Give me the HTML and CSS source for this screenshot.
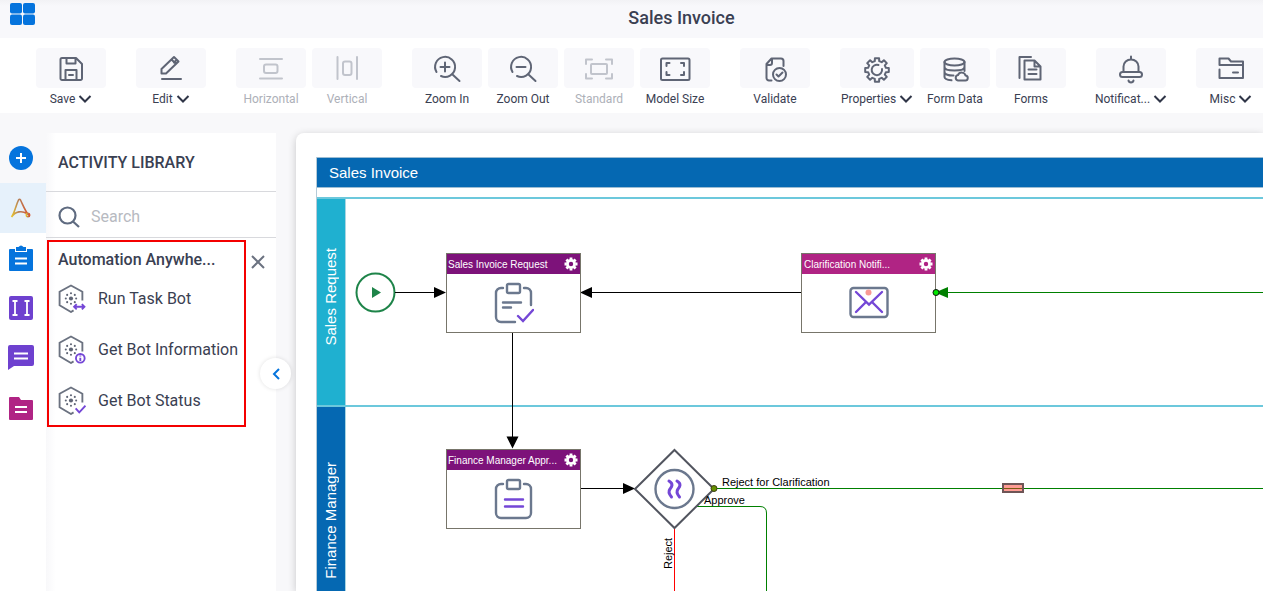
FILE: index.html
```html
<!DOCTYPE html>
<html lang="en">
<head>
  <meta charset="UTF-8" />
  <meta name="viewport" content="width=device-width, initial-scale=1.0"/>
  <title>Sales Invoice</title>
  <link rel="stylesheet" href="styles.css">
</head>
<body>
  <header class="topbar">
    <button class="apps" aria-label="Apps">
      <svg width="26" height="24" viewBox="0 0 26 24" fill="#0574dd"><rect x="0" y="1" width="12" height="10.500" rx="2"/><rect x="13" y="1" width="12" height="10.500" rx="2"/><rect x="0" y="12.500" width="12" height="10.500" rx="2"/><rect x="13" y="12.500" width="12" height="10.500" rx="2"/></svg>
    </button>
    <h1>Sales Invoice</h1>
  </header>

  <nav class="toolbar">
    <div class="group">
      <button class="tool">
        <span class="tile"><svg class="icon" viewBox="0 0 32 32"><path d="M7 6h14l6 6v14.500a1.500 1.500 0 0 1-1.500 1.500H7a1.500 1.500 0 0 1-1.500-1.500V7.500A1.500 1.500 0 0 1 7 6zM11.500 6v5.500h9V6M10.500 28V18h11v10M14 23h4"/></svg></span>
        <span class="label">Save <svg class="chev" viewBox="0 0 14 8"><path d="M1.500 1l5.500 5.500L12.500 1"/></svg></span>
      </button>
    </div>
    <div class="group">
      <button class="tool">
        <span class="tile"><svg class="icon" viewBox="0 0 32 32"><path d="M7 27h19M6.500 21.500v-4.500L19 5l4.500 4.500L11 21.500zM16.500 7.500l4.500 4.500M21 8.500l-2 2"/></svg></span>
        <span class="label">Edit <svg class="chev" viewBox="0 0 14 8"><path d="M1.500 1l5.500 5.500L12.500 1"/></svg></span>
      </button>
    </div>
    <div class="group">
      <button class="tool" disabled>
        <span class="tile"><svg class="icon" viewBox="0 0 32 32"><path d="M5 7h22M5 26.500h22"/><rect x="9" y="12.500" width="13.500" height="8.500" rx="2"/></svg></span>
        <span class="label">Horizontal</span>
      </button>
      <button class="tool" disabled>
        <span class="tile"><svg class="icon" viewBox="0 0 32 32"><path d="M6.500 5v22M26 5v22"/><rect x="12" y="9.500" width="8.500" height="13.500" rx="2"/></svg></span>
        <span class="label">Vertical</span>
      </button>
    </div>
    <div class="group">
      <button class="tool">
        <span class="tile"><svg class="icon" viewBox="0 0 32 32"><path d="M5.500 20A10 10 0 1 1 10 24M14 10.500v9M9.500 15h9M21.500 22.500L28.500 29"/></svg></span>
        <span class="label">Zoom In</span>
      </button>
      <button class="tool">
        <span class="tile"><svg class="icon" viewBox="0 0 32 32"><path d="M5.500 20A10 10 0 1 1 10 24M9.500 15h9M21.500 22.500L28.500 29"/></svg></span>
        <span class="label">Zoom Out</span>
      </button>
      <button class="tool" disabled>
        <span class="tile"><svg class="icon" viewBox="0 0 32 32"><path d="M3 12V7.500h6M23 7.500h6V12M29 22v4.500h-6M9 26.500H3V22"/><rect x="8" y="12" width="16" height="10" rx="1"/></svg></span>
        <span class="label">Standard</span>
      </button>
      <button class="tool">
        <span class="tile"><svg class="icon" viewBox="0 0 32 32"><rect x="2" y="6.500" width="28.500" height="21.500" rx="1.500"/><path d="M7.500 14v-3h3M22 11h3v3M25 20v3h-3M10.500 23h-3v-3"/></svg></span>
        <span class="label">Model Size</span>
      </button>
    </div>
    <div class="group">
      <button class="tool">
        <span class="tile"><svg class="icon" viewBox="0 0 32 32"><path d="M12.500 28.500H10A2.500 2.500 0 0 1 7.500 26V12l5-5.500H22A2.500 2.500 0 0 1 24.500 9v5M7.500 13H11a2 2 0 0 0 2-2V7"/><circle cx="20.500" cy="22.500" r="6.500"/><path d="M17.500 22.500l2 2 4-4"/></svg></span>
        <span class="label">Validate</span>
      </button>
    </div>
    <div class="group">
      <button class="tool tool-wide">
        <span class="tile"><svg class="icon" viewBox="0 0 32 32"><path transform="translate(16 18)" d="M8.900-2.200L11.800-2.100V2.100L8.900 2.200 7.800 4.700 9.800 6.900 6.900 9.800 4.700 7.800 2.200 8.900 2.100 11.800H-2.100L-2.200 8.900-4.700 7.800-6.900 9.800-9.800 6.900-7.800 4.700-8.900 2.200-11.800 2.100V-2.100L-8.900-2.200-7.800-4.700-9.800-6.900-6.900-9.800-4.700-7.800-2.200-8.900-2.100-11.800H2.100L2.200-8.900 4.700-7.800 6.900-9.800 9.800-6.900 7.800-4.700z"/><path d="M21 17a5.200 5.200 0 1 1-3.500-4"/></svg></span>
        <span class="label">Properties <svg class="chev" viewBox="0 0 14 8"><path d="M1.500 1l5.500 5.500L12.500 1"/></svg></span>
      </button>
      <button class="tool">
        <span class="tile"><svg class="icon" viewBox="0 0 32 32"><ellipse cx="15.500" cy="10" rx="10" ry="3.500"/><path d="M5.500 10v15c0 1.500 2.500 2.800 7 3.300M25.500 10v9M5.500 15c0 4.700 20 4.700 20 0M5.500 20c0 2.500 4.500 3.600 9 3.500M19 28.500h7a2.500 2.500 0 0 0 .500-5 4 4 0 0 0-7.500-.500 2.800 2.800 0 0 0 0 5.500z"/></svg></span>
        <span class="label">Form Data</span>
      </button>
      <button class="tool">
        <span class="tile"><svg class="icon" viewBox="0 0 32 32"><path d="M4.500 26V5H16M9.500 8.500h10l6 6V27.500h-16zM19.500 8.500v6h6M13.500 17.500h8M13.500 22h8"/></svg></span>
        <span class="label">Forms</span>
      </button>
    </div>
    <div class="group">
      <button class="tool">
        <span class="tile"><svg class="icon" viewBox="0 0 32 32"><path d="M16 4.500v3M8.500 20v-5.500a7.500 7 0 0 1 15 0V20M13.500 28.500c.500 2.500 4.500 2.500 5 0"/><rect x="5" y="20" width="22" height="5" rx="2.500"/></svg></span>
        <span class="label">Notificat... <svg class="chev" viewBox="0 0 14 8"><path d="M1.500 1l5.500 5.500L12.500 1"/></svg></span>
      </button>
    </div>
    <div class="group">
      <button class="tool">
        <span class="tile"><svg class="icon" viewBox="0 0 32 32"><path d="M4.500 13V6.500h9l2.500 3h12V13H4.500M4.500 17.500V26h23.500V13M18 20.500h5"/></svg></span>
        <span class="label">Misc <svg class="chev" viewBox="0 0 14 8"><path d="M1.500 1l5.500 5.500L12.500 1"/></svg></span>
      </button>
    </div>
  </nav>

  <div class="workspace">
    <aside class="rail">
      <button class="rail-item add" aria-label="Add">
        <svg viewBox="0 0 28 28"><circle cx="14" cy="14" r="12" fill="#0574dd"/><path d="M14 9v10M9 14h10" stroke="#fff" stroke-width="2"/></svg>
      </button>
      <button class="rail-item active" aria-label="Automation Anywhere">
        <svg viewBox="0 0 28 28" fill="none" stroke="url(#aa)" stroke-width="1.600"><defs><linearGradient id="aa"><stop offset="0" stop-color="#e9c32c"/><stop offset=".400" stop-color="#b5815a"/><stop offset="1" stop-color="#d9542b"/></linearGradient></defs><path d="M4.500 23C8 18 9 11 11.500 6q1-1.500 2 0C16 11 18 17 22 21.500M4.500 23c4-6 10.500-6.500 15.500-3.500"/><circle cx="21" cy="21" r="1.700"/></svg>
      </button>
      <button class="rail-item" aria-label="Tasks">
        <svg viewBox="0 0 28 28"><path fill="#0574dd" d="M3 5h5v3h12V5h5a1 1 0 0 1 1 1v20a1 1 0 0 1-1 1H3a1 1 0 0 1-1-1V6a1 1 0 0 1 1-1zM9 3h2.500q2.500-3 5 0H19v4H9z"/><path d="M8 14.500h12M8 19.500h12" stroke="#fff" stroke-width="2"/></svg>
      </button>
      <button class="rail-item" aria-label="Fields">
        <svg viewBox="0 0 28 28"><rect x="2" y="2" width="24" height="24" rx="2" fill="#6e41cf"/><path d="M5.500 7h5M5.500 21h5M8 7v14M17.500 7h5M17.500 21h5M20 7v14" stroke="#fff" stroke-width="1.800"/></svg>
      </button>
      <button class="rail-item" aria-label="Messages">
        <svg viewBox="0 0 28 28"><path fill="#6e41cf" d="M3 1h22a2 2 0 0 1 2 2v17a2 2 0 0 1-2 2H7l-6 4V3a2 2 0 0 1 2-2z"/><path d="M7 9.500h14M7 14.500h14" stroke="#fff" stroke-width="2"/></svg>
      </button>
      <button class="rail-item" aria-label="Folders">
        <svg viewBox="0 0 28 28"><path fill="#b02484" d="M3 3h9l2 3h11a1 1 0 0 1 1 1v18a1 1 0 0 1-1 1H3a1 1 0 0 1-1-1V4a1 1 0 0 1 1-1z"/><path d="M8 13h12M8 18h12" stroke="#fff" stroke-width="2"/></svg>
      </button>
    </aside>

    <section class="library">
      <h2>ACTIVITY LIBRARY</h2>
      <label class="search">
        <svg width="22" height="22" viewBox="0 0 22 22" fill="none" stroke="#5f6b80" stroke-width="2.200"><circle cx="9.500" cy="9.500" r="8"/><path d="M15 15.500L21 21"/></svg>
        <input type="text" placeholder="Search" aria-label="Search">
      </label>
      <div class="category">
        <div class="activities">
          <h3>Automation Anywhe...</h3>
          <ul>
            <li>
              <svg class="bot" viewBox="0 0 28 28"><path d="M24.500 16V7.500L13.500 1.500l-11 6v13l11 6.500 2.500-1.500"/><use href="#dots"/><path class="mark" d="M17 22h9M19 19.500L16.500 22l2.500 2.500M24 19.500l2.500 2.500-2.500 2.500"/></svg>
              <a href="#">Run Task Bot</a>
            </li>
            <li>
              <svg class="bot" viewBox="0 0 28 28"><path d="M24.500 16V7.500L13.500 1.500l-11 6v13l11 6.500 2.500-1.500"/><use href="#dots"/><circle class="mark" cx="22.500" cy="22.500" r="4.200"/><path class="mark" d="M22.500 22v3M22.500 19.800v.900"/></svg>
              <a href="#">Get Bot Information</a>
            </li>
            <li>
              <svg class="bot" viewBox="0 0 28 28"><path d="M24.500 16V7.500L13.500 1.500l-11 6v13l11 6.500 2.500-1.500"/><use href="#dots"/><path class="mark" d="M18 21.500l3.500 4 6-6.500"/></svg>
              <a href="#">Get Bot Status</a>
            </li>
          </ul>
        </div>
        <button class="close" aria-label="Close">
          <svg width="14" height="14" viewBox="0 0 14 14" fill="none" stroke="#6b7280" stroke-width="2"><path d="M1 1l12 12M13 1L1 13"/></svg>
        </button>
      </div>
      <button class="collapse" aria-label="Collapse panel">
        <svg width="8" height="12" viewBox="0 0 8 12" fill="none" stroke="#0574dd" stroke-width="2"><path d="M7 1L2 6l5 5"/></svg>
      </button>
    </section>

    <main class="canvas">
      <div class="pool">
        <div class="pool-title">Sales Invoice</div>
        <div class="lane request"><div class="lane-title"><span>Sales Request</span></div></div>
        <div class="lane finance"><div class="lane-title"><span>Finance Manager</span></div></div>
      </div>

      <svg class="flows">
        <defs>
          <g id="dots" fill="#5f6575" stroke="none"><circle cx="13.500" cy="14" r="2"/><circle cx="13.500" cy="9" r="1"/><circle cx="13.500" cy="19" r="1"/><circle cx="8.500" cy="14" r="1"/><circle cx="18.500" cy="14" r="1"/><circle cx="9.800" cy="10.500" r="1"/><circle cx="17.200" cy="10.500" r="1"/><circle cx="9.800" cy="17.500" r="1"/><circle cx="17.200" cy="17.500" r="1"/></g>
          <g id="cog"><circle cx="7" cy="7" r="3.600" fill="none" stroke="#fff" stroke-width="2.800"/><path d="M7 .500v2M7 11.500v2M.500 7h2M11.500 7h2M2.400 2.400l1.500 1.500M10.100 10.100l1.500 1.500M2.400 11.600l1.500-1.500M10.100 3.900l1.500-1.500" stroke="#fff" stroke-width="2.800"/></g>
        </defs>
        <circle cx="79.500" cy="159.500" r="19" fill="#fff" stroke="#1e8449" stroke-width="2"/>
        <path d="M76 154l9 5.500-9 5.500z" fill="#1e8449"/>
        <g stroke="#000"><path d="M99 159.500h40M505 159.500H296M216.500 200v106M285 355.500h43"/></g>
        <path d="M138 154l12 5.500-12 5.500zM296 154l-12 5.500 12 5.500zM210.500 303.500h12l-6 12zM327 350l12 5.500-12 5.500z"/>
        <g stroke="#008000" fill="none"><path d="M650 159.500h4000M418 355.500h4000M397 373.500h67q6.500 0 6.500 6.500v600"/></g>
        <path d="M378.500 395v600" stroke="#f00"/>
        <path d="M378.500 317l39.500 39-39.500 39-39.500-39z" fill="#fff" stroke="#52555f" stroke-width="2"/>
        <circle cx="378.500" cy="356" r="19" fill="#fff" stroke="#6b788e" stroke-width="2.400"/>
        <path d="M373 348c5 3 2.500 6 1 8s-1.500 4.500 1.500 8M381 348c5 3 2.500 6 1 8s-1.500 4.500 1.500 8" fill="none" stroke="#7447d6" stroke-width="3" stroke-linecap="round"/>
        <circle cx="418" cy="355.500" r="3" fill="#679100" stroke="#3c3c14"/>
        <rect x="707" y="351" width="20" height="8" fill="#ff9c94" stroke="#6e5556" stroke-width="2"/><path d="M708 355.500h18" stroke="#7a5a10"/>
        <text x="426" y="353">Reject for Clarification</text>
        <text x="408" y="371">Approve</text>
        <text transform="translate(376 436) rotate(-90)">Reject</text>
      </svg>

      <article class="node node-request">
        <h4>Sales Invoice Request <svg width="14" height="14"><use href="#cog"/></svg></h4>
        <svg class="glyph" viewBox="0 0 40 42"><path d="M9 6H7a5 5 0 0 0-5 5v24a5 5 0 0 0 5 5h14M30 6h2a5 5 0 0 1 5 5v12M9 20.500h18M9 25.500h8"/><rect x="13" y="2" width="13" height="9" rx="1.500"/><path class="mark" d="M24 34l5 5 10-11"/></svg>
      </article>
      <article class="node node-clarify">
        <h4>Clarification Notifi... <svg width="14" height="14"><use href="#cog"/></svg></h4>
        <svg class="glyph" viewBox="0 0 40 42"><rect x="1.500" y="6" width="37" height="29" rx="3"/><path class="mark" d="M7 10l13 12.500L33 10M7 30l10-10M33 30L23 20"/><circle cx="19.500" cy="10.500" r="3" fill="#f89a94" stroke="none"/></svg>
      </article>
      <article class="node node-finance">
        <h4>Finance Manager Appr... <svg width="14" height="14"><use href="#cog"/></svg></h4>
        <svg class="glyph" viewBox="0 0 40 42"><path d="M9 6H7a5 5 0 0 0-5 5v24a5 5 0 0 0 5 5h25a5 5 0 0 0 5-5V11a5 5 0 0 0-5-5h-2"/><rect x="13" y="2" width="13" height="9" rx="1.500"/><path class="mark" d="M11 21.500h18M11 28.500h18"/></svg>
      </article>
      <svg class="port" width="16" height="12" viewBox="0 0 16 12"><path d="M3 5.500L16 0v11z" fill="#008000"/><circle cx="4" cy="5.500" r="3" fill="#00e600" stroke="#111"/></svg>
    </main>
  </div>
</body>
</html>
```
FILE: styles.css
```css
* {
  box-sizing: border-box;
}
body {
  margin: 0;
  height: 100vh;
  display: flex;
  flex-direction: column;
  overflow: hidden;
  background: #f8f8fa;
  color: #3a4052;
  font-family: Roboto, sans-serif;
}
button {
  padding: 0;
  border: none;
  background: none;
  color: inherit;
  font: inherit;
  cursor: pointer;
}
h1, h2, h3, h4, ul {
  margin: 0;
  padding: 0;
}
svg {
  display: block;
  flex: none;
}

/* header */
.topbar {
  height: 38px;
  display: flex;
  padding-left: 10px;
  background: linear-gradient(#f2f2f5, #f8f8fb 6px);
}
.apps {
  height: 28px;
}
.topbar h1 {
  flex: 1;
  padding-left: 64px;
  font-size: 18px;
  font-weight: 500;
  line-height: 36px;
  text-align: center;
}

/* toolbar */
.toolbar {
  display: flex;
  gap: 30px;
  padding: 10px 0 3px 36px;
  background: #fff;
  overflow: hidden;
}
.group {
  display: flex;
  flex: none;
  gap: 6px;
}
.tool {
  width: 70px;
  display: flex;
  flex-direction: column;
  align-items: center;
}
.tool-wide {
  width: 74px;
}
.tile {
  width: 100%;
  height: 40px;
  display: flex;
  align-items: center;
  justify-content: center;
  border-radius: 4px;
  background: #f8f8fb;
}
.icon {
  width: 32px;
  height: 32px;
  fill: none;
  stroke: #5f6575;
  stroke-width: 2;
  stroke-linecap: round;
  stroke-linejoin: round;
}
.label {
  display: flex;
  align-items: center;
  gap: 3px;
  font-size: 12px;
  line-height: 22px;
  white-space: nowrap;
}
.chev {
  width: 14px;
  height: 8px;
  fill: none;
  stroke: #2f3547;
  stroke-width: 2;
}
.tool:disabled {
  color: #adb0b8;
}
.tool:disabled .icon {
  stroke: #c1c4cc;
}

/* left side */
.workspace {
  flex: 1;
  display: flex;
  min-height: 0;
  padding-top: 20px;
}
.rail {
  width: 46px;
  flex: none;
  background: #fff;
}
.rail-item {
  width: 100%;
  height: 50px;
  display: flex;
  align-items: center;
  justify-content: center;
  padding-right: 4px;
}
.rail-item svg {
  width: 28px;
  height: 28px;
}
.add {
  background: #f8f8fa;
}
.active {
  background: #e6f1fb;
}
.library {
  position: relative;
  width: 230px;
  flex: none;
  background: linear-gradient(90deg, #f8f8fa, #fff 10px);
}
.library h2 {
  height: 59px;
  padding-left: 12px;
  border-bottom: 1px solid #d8d9dd;
  font-size: 16px;
  font-weight: 500;
  line-height: 60px;
}
.search {
  height: 46px;
  display: flex;
  align-items: center;
  gap: 11px;
  padding: 4px 12px 0;
  border-bottom: 1px solid #d8d9dd;
}
.search input {
  width: 100%;
  min-width: 0;
  padding: 0;
  border: none;
  outline: none;
  background: none;
  color: inherit;
  font: 16px Roboto, sans-serif;
}
.search input::placeholder {
  color: #b7bac1;
}
.category {
  display: flex;
  align-items: flex-start;
  gap: 5px;
  padding: 2px 10px 0 1px;
}
.activities {
  width: 199px;
  height: 187px;
  flex: none;
  border: 2px solid #f40000;
}
.activities h3 {
  padding-left: 9px;
  font-size: 16px;
  font-weight: 500;
  line-height: 36px;
  height: 31px;
}
.activities li {
  height: 51px;
  display: flex;
  align-items: center;
  gap: 12px;
  padding-left: 8px;
}
.activities a {
  color: inherit;
  font-size: 16px;
  text-decoration: none;
  white-space: nowrap;
}
.bot {
  width: 29px;
  height: 29px;
  fill: none;
  stroke: #6b7280;
  stroke-width: 1.8;
}
.mark {
  stroke: #7447d6;
}
.close {
  padding-top: 15px;
}
.collapse {
  position: absolute;
  top: 225px;
  right: -15px;
  z-index: 2;
  width: 31px;
  height: 31px;
  display: flex;
  align-items: center;
  justify-content: center;
  border-radius: 50%;
  background: #fff;
  box-shadow: 0 0 4px rgba(0, 0, 0, .12);
}

/* diagram */
.canvas {
  position: relative;
  flex: 1;
  min-width: 0;
  margin-left: 20px;
  padding: 24px 0 0 20px;
  overflow: hidden;
  border-radius: 8px 0 0 0;
  background: #fff;
  box-shadow: 0 2px 8px rgba(0, 0, 0, .2);
  font-family: "Liberation Sans", sans-serif;
}
.pool {
  border-left: 1px solid #b5cbd8;
}
.pool-title {
  height: 31px;
  margin-bottom: 9px;
  padding-left: 12px;
  border: 1px solid #9dbdd3;
  border-width: 1px 0;
  background: #0568b2;
  color: #fff;
  font-size: 15px;
  line-height: 30px;
}
.lane {
  display: flex;
  border-top: 2px solid #6cc8dc;
}
.request {
  height: 208px;
}
.finance {
  height: 230px;
}
.lane-title {
  width: 29px;
  display: flex;
  align-items: center;
  justify-content: center;
  padding-right: 2px;
  border-right: 1px solid #a9d5e2;
  color: #fff;
  font-size: 15px;
}
.lane-title span {
  writing-mode: vertical-rl;
  transform: rotate(180deg);
}
.request .lane-title {
  padding-bottom: 10px;
  background: #1fb0d0;
}
.finance .lane-title {
  padding-bottom: 2px;
  background: #0568b2;
}
.flows {
  position: absolute;
  top: 0;
  left: 0;
  width: 100%;
  height: 100%;
}
.flows text {
  font-size: 11px;
}
.node {
  position: absolute;
  width: 135px;
  height: 80px;
  border: 1px solid #77756a;
  background: #fff;
}
.node h4 {
  height: 20px;
  display: flex;
  align-items: center;
  justify-content: space-between;
  padding: 0 2px 0 1px;
  background: #7d127a;
  color: #fff;
  font-size: 10px;
  font-weight: normal;
  white-space: nowrap;
}
.node-request {
  left: 150px;
  top: 120px;
}
.node-clarify {
  left: 505px;
  top: 120px;
}
.node-clarify h4 {
  padding-left: 2px;
  background: #b02484;
}
.node-finance {
  left: 150px;
  top: 316px;
}
.glyph {
  width: 40px;
  height: 42px;
  margin: 8px auto 0;
  fill: none;
  stroke: #6b788e;
  stroke-width: 2.4;
  stroke-linecap: round;
}
.port {
  position: absolute;
  left: 636px;
  top: 154px;
}
```
